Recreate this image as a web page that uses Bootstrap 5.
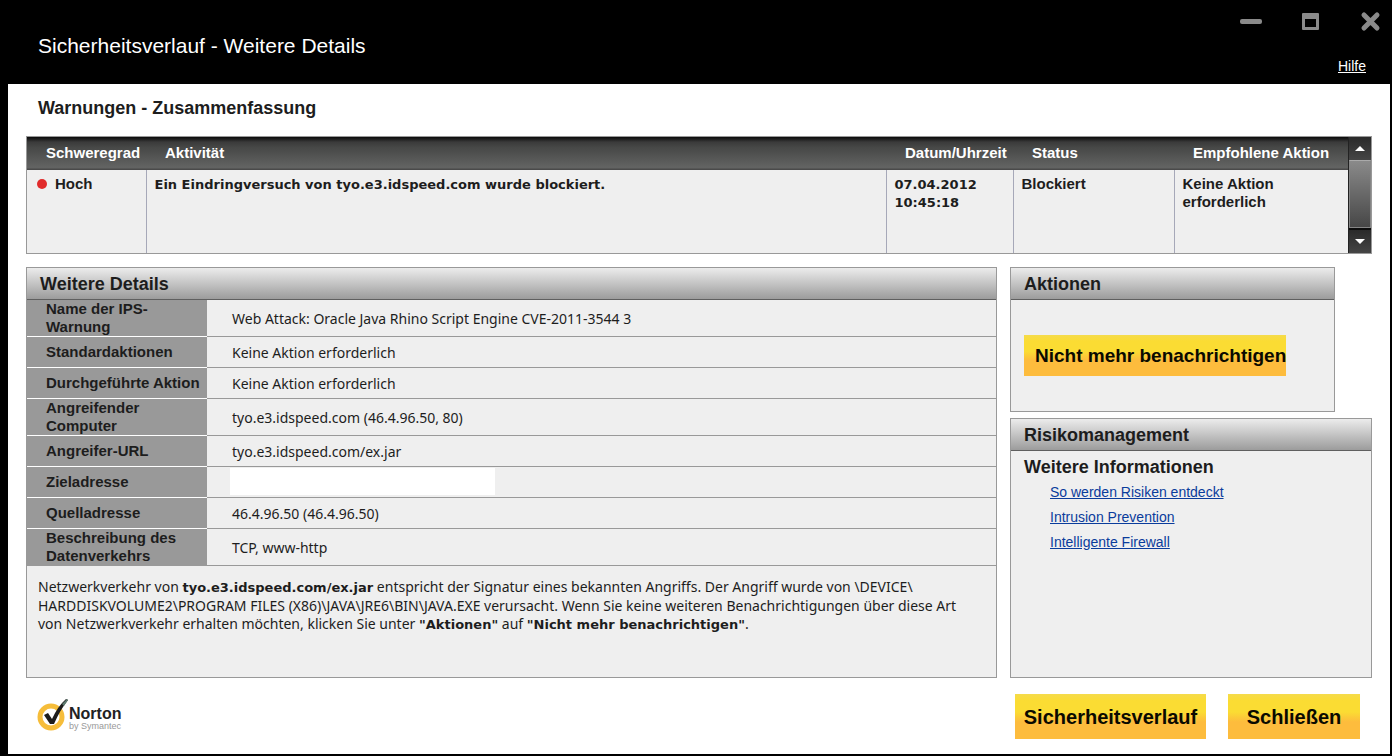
<!DOCTYPE html>
<html lang="de">
<head>
<meta charset="utf-8">
<meta name="viewport" content="width=device-width, initial-scale=1">
<title>Sicherheitsverlauf - Weitere Details</title>
<link href="https://cdn.jsdelivr.net/npm/bootstrap@5.3.0/dist/css/bootstrap.min.css" rel="stylesheet">
<style>
  body { background: #000; color: #1d1d1d; font-family: "Liberation Sans", Arial, sans-serif; font-size: 15px; line-height: 18px; }
  .window { min-height: 100vh; padding: 0 2px 2px 8px; }
  .titlebar { height: 84px; padding: 0 24px 0 30px; }
  .titlebar h1 { font-size: 21px; line-height: 24px; margin: 34px 0 0; }
  .win-controls { margin: 10px -17px 0 0; gap: 36px; }
  .win-btn { width: 24px; height: 24px; padding: 0; border: 0; background: none; display: block; }
  .win-btn svg { display: block; }
  .help-link { font-size: 14px; color: #fff; margin-top: 23px; }
  .sheet { background: #fff; padding: 0 18px; }
  .sheet h2, .panel h2, .panel h3 { font-size: 18px; line-height: 22px; font-weight: 700; margin: 0; }
  .sheet > h2 { padding: 13px 12px 17px; }
  .ui-text { font-family: "Noto Sans", Tahoma, Verdana, sans-serif; font-size: 14px; }
  .ui-text b, .alerts .ui-text { font-family: "DejaVu Sans", Tahoma, Verdana, sans-serif; font-size: 13px; font-weight: 700; }

  .alert-box { border: 1px solid #999; background: #efefef; min-height: 118px; }
  .alerts { width: 100%; table-layout: fixed; font-weight: 700; }
  .alerts thead tr { background: linear-gradient(#0a0a0a 0, #3a3a3a 5px, #464746 10px, #626362 30px, #626362 31px, #4a4a4a 32px); color: #fff; }
  .alerts th { height: 33px; padding: 0 0 2px 19px; white-space: nowrap; }
  .alerts td { height: 83px; vertical-align: top; padding: 5px 8px; }
  .alerts td.ui-text { padding-top: 6px; }
  .alerts td + td { border-left: 1px solid #a6a8b8; }
  .alerts .sev { padding-left: 10px; }
  .sev-dot { width: 10px; height: 10px; border-radius: 50%; background: #e12b2b; }

  .scroller { width: 23px; background: #0c0c0c; border-left: 1px solid #222; }
  .scroller button { width: 100%; height: 23px; padding: 0; border: 0; background: linear-gradient(#2a2a2a, #454545); display: block; }
  .scroller button svg { display: block; margin: 0 auto; }
  .thumb { background: linear-gradient(#8a8a8a, #474747); border: 1px solid #858585; border-top-color: #aaa; margin-bottom: 2px; }

  .panel { border: 1px solid #999; background: #efefef; }
  .panel > h2 { height: 32px; padding: 5px 13px 0; background: linear-gradient(#ececec, #9c9c9c); border-bottom: 1px solid #5f5f5f; }
  .columns { gap: 13px; margin-top: 13px; min-height: 411px; }
  .side { width: 362px; gap: 6px; }
  .actions { margin-right: 37px; height: 145px; }
  .details { width: 100%; }
  .details th { width: 180px; height: 31px; padding: 0 0 0 19px; background: #999; border-bottom: 1px solid #fff; }
  .details td { padding: 2px 0 0 25px; border-bottom: 1px solid #999; }
  .details tr:last-child th { border-bottom-color: #999; }
  .details td.blank-cell { padding: 1px 0 2px 23px; }
  .redacted { width: 265px; height: 27px; background: #fff; }
  .description { padding: 12px 18px 0 11px; margin: 0; }
  .risk-body { padding: 5px 13px; }
  .risk-links { padding: 2px 0 0 26px; font-size: 14px; line-height: 25px; }
  .risk-links a { color: #0a3c9c; }

  .gold { border: 0; border-radius: 0; color: #0a0a00; font-weight: 700; white-space: nowrap; background: linear-gradient(#f5db4b 0, #fbdc33 15%, #fbdc33 40%, #fdbc3d 62%, #fdbc3d 100%); }
  .gold:hover { color: #000; }
  .gold-sm { width: 262px; height: 41px; margin: 35px 13px; padding: 0 11px; font-size: 19px; text-align: left; display: block; overflow: visible; }
  .gold-lg { height: 45px; padding: 0; font-size: 20px; }
  .w-history { width: 191px; }
  .w-close { width: 132px; }
  .bottom { height: 76px; padding: 0 12px 0 11px; }
  .bottom-buttons { gap: 22px; padding-top: 1px; }
</style>
</head>
<body>
<div class="window d-flex flex-column">
  <header class="titlebar d-flex justify-content-between text-white">
    <h1 class="fw-normal">Sicherheitsverlauf - Weitere Details</h1>
    <div class="d-flex flex-column align-items-end">
      <div class="win-controls d-flex">
        <button type="button" class="win-btn" aria-label="Minimieren"><svg width="24" height="24"><rect x="1" y="9" width="22" height="5" rx="2" fill="#8a8a8a"/></svg></button>
        <button type="button" class="win-btn" aria-label="Maximieren"><svg width="24" height="24"><path fill="#8a8a8a" fill-rule="evenodd" d="M4 3h15q1 0 1 1v15q0 1-1 1H4q-1 0-1-1V4q0-1 1-1zM6 9v8h11V9z"/></svg></button>
        <button type="button" class="win-btn" aria-label="Fenster schließen"><svg width="24" height="24"><path d="M5 5L18 18M18 5L5 18" stroke="#8a8a8a" stroke-width="5" stroke-linecap="round"/></svg></button>
      </div>
      <a href="#" class="help-link">Hilfe</a>
    </div>
  </header>

  <main class="sheet flex-grow-1 d-flex flex-column">
    <h2>Warnungen - Zusammenfassung</h2>

    <div class="alert-box d-flex">
      <div class="flex-grow-1">
        <table class="alerts">
          <colgroup><col style="width:119px"><col><col style="width:127px"><col style="width:161px"><col style="width:174px"></colgroup>
          <thead>
            <tr><th scope="col">Schweregrad</th><th scope="col">Aktivität</th><th scope="col">Datum/Uhrzeit</th><th scope="col">Status</th><th scope="col">Empfohlene Aktion</th></tr>
          </thead>
          <tbody>
            <tr>
              <td class="sev"><div class="d-flex align-items-center"><span class="sev-dot me-2"></span>Hoch</div></td>
              <td class="ui-text">Ein Eindringversuch von tyo.e3.idspeed.com wurde blockiert.</td>
              <td class="ui-text">07.04.2012<br>10:45:18</td>
              <td>Blockiert</td>
              <td>Keine Aktion<br>erforderlich</td>
            </tr>
          </tbody>
        </table>
      </div>
      <div class="scroller d-flex flex-column flex-shrink-0">
        <button type="button" aria-label="Nach oben"><svg width="10" height="23"><path d="M0 14L5 9l5 5z" fill="#fff"/></svg></button>
        <div class="thumb flex-grow-1"></div>
        <button type="button" aria-label="Nach unten"><svg width="10" height="23"><path d="M0 9h10l-5 5z" fill="#fff"/></svg></button>
      </div>
    </div>

    <div class="columns d-flex flex-grow-1">
      <section class="panel flex-grow-1">
        <h2>Weitere Details</h2>
        <table class="details">
          <tbody>
            <tr><th scope="row">Name der IPS-<br>Warnung</th><td class="ui-text">Web Attack: Oracle Java Rhino Script Engine CVE-2011-3544 3</td></tr>
            <tr><th scope="row">Standardaktionen</th><td class="ui-text">Keine Aktion erforderlich</td></tr>
            <tr><th scope="row" class="text-nowrap">Durchgeführte Aktion</th><td class="ui-text">Keine Aktion erforderlich</td></tr>
            <tr><th scope="row">Angreifender<br>Computer</th><td class="ui-text">tyo.e3.idspeed.com (46.4.96.50, 80)</td></tr>
            <tr><th scope="row">Angreifer-URL</th><td class="ui-text">tyo.e3.idspeed.com/ex.jar</td></tr>
            <tr><th scope="row">Zieladresse</th><td class="blank-cell"><div class="redacted"></div></td></tr>
            <tr><th scope="row">Quelladresse</th><td class="ui-text">46.4.96.50 (46.4.96.50)</td></tr>
            <tr><th scope="row">Beschreibung des<br>Datenverkehrs</th><td class="ui-text">TCP, www-http</td></tr>
          </tbody>
        </table>
        <p class="description ui-text">Netzwerkverkehr von <b>tyo.e3.idspeed.com/ex.jar</b> entspricht der Signatur eines bekannten Angriffs. Der Angriff wurde von \DEVICE\<wbr>HARDDISKVOLUME2\PROGRAM FILES (X86)\JAVA\JRE6\BIN\JAVA.EXE verursacht. Wenn Sie keine weiteren Benachrichtigungen über diese Art von Netzwerkverkehr erhalten möchten, klicken Sie unter <b>"Aktionen"</b> auf <b>"Nicht mehr benachrichtigen"</b>.</p>
      </section>

      <div class="side d-flex flex-column flex-shrink-0">
        <section class="panel actions">
          <h2>Aktionen</h2>
          <button type="button" class="gold gold-sm">Nicht mehr benachrichtigen</button>
        </section>
        <section class="panel flex-grow-1">
          <h2>Risikomanagement</h2>
          <div class="risk-body">
            <h3>Weitere Informationen</h3>
            <ul class="risk-links list-unstyled mb-0">
              <li><a href="#">So werden Risiken entdeckt</a></li>
              <li><a href="#">Intrusion Prevention</a></li>
              <li><a href="#">Intelligente Firewall</a></li>
            </ul>
          </div>
        </section>
      </div>
    </div>

    <footer class="bottom d-flex justify-content-between align-items-center">
      <svg width="96" height="36" viewBox="0 0 96 36" role="img" aria-label="Norton by Symantec">
        <circle cx="14" cy="19" r="11" fill="none" stroke="#f6bd3a" stroke-width="5"/>
        <path d="M7 17l4-2 4 6Q21 8 29 1l2 1Q23 12 17 26h-4z" fill="#1d1d1d"/>
        <path d="M25 6l5-5 1 1-4 6z" fill="#5d7a70"/>
        <text x="32" y="21" font-family="Liberation Sans, sans-serif" font-size="16" font-weight="700" fill="#222">Norton</text>
        <text x="32" y="31" font-family="Liberation Sans, sans-serif" font-size="9" fill="#999">by Symantec</text>
      </svg>
      <div class="bottom-buttons d-flex">
        <button type="button" class="gold gold-lg w-history">Sicherheitsverlauf</button>
        <button type="button" class="gold gold-lg w-close">Schließen</button>
      </div>
    </footer>
  </main>
</div>
<script src="https://cdn.jsdelivr.net/npm/bootstrap@5.3.0/dist/js/bootstrap.bundle.min.js"></script>
</body>
</html>
